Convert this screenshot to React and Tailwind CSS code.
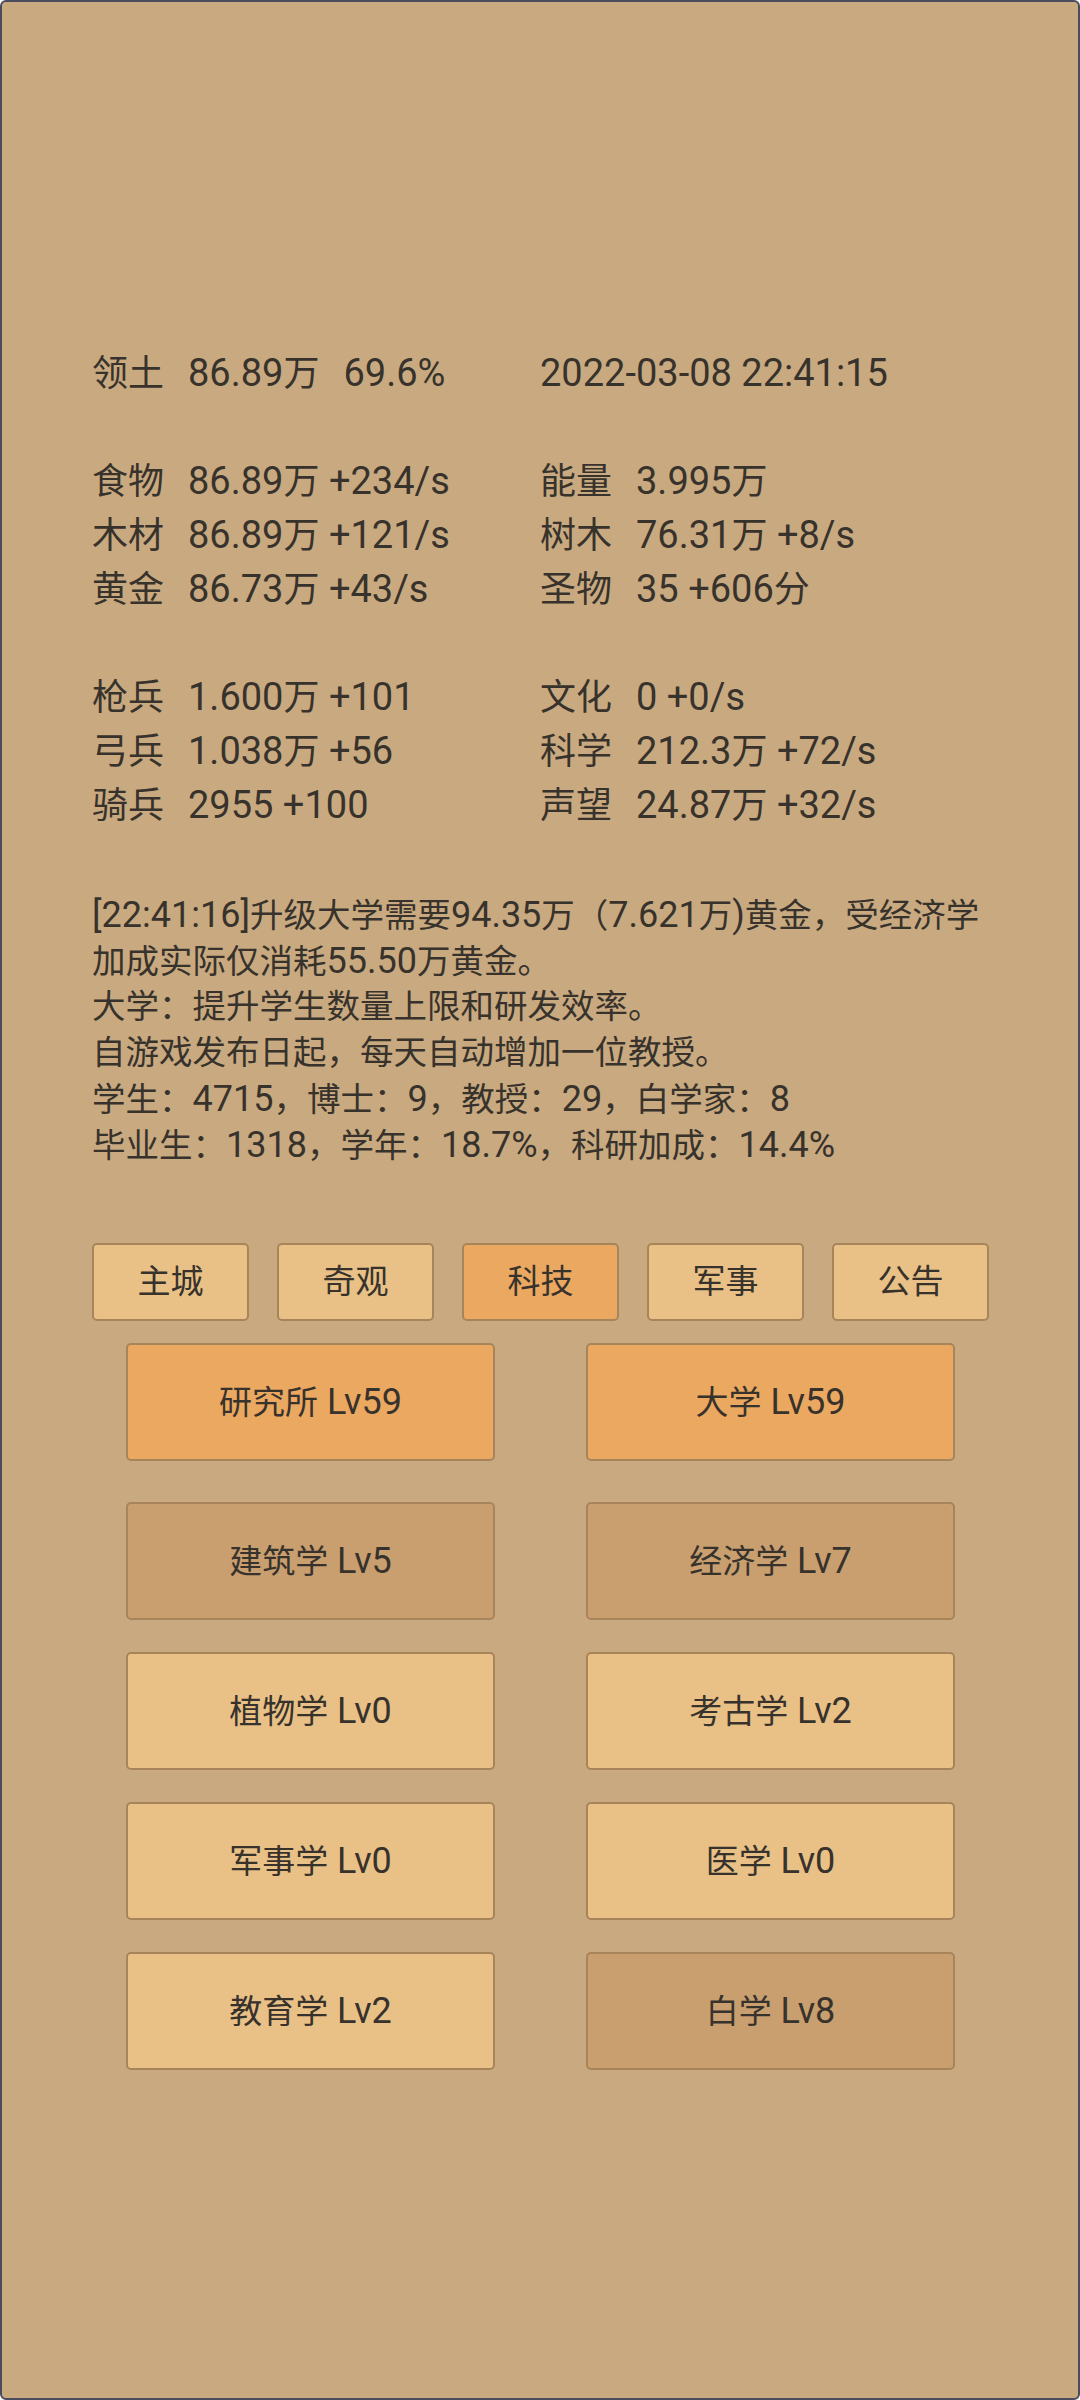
import React from "react";

const font = "font-['Roboto','Noto_Sans_CJK_SC',sans-serif]";

const CJK = /[\u3000-\u303f\u3400-\u9fff\uff00-\uffef]/;

// Wrap non-CJK runs in a span so Latin glyphs can be sized like the reference
function T({ s, latin }) {
  const parts = s.split(/([\u3000-\u303f\u3400-\u9fff\uff00-\uffef]+|  )/);
  return (
    <>
      {parts.map((p, i) => {
        if (p === "") return null;
        if (p === "  ") return <span key={i} className="inline-block w-[24px]" />;
        if (CJK.test(p)) return <span key={i}>{p}</span>;
        return (
          <span key={i} className={latin}>
            {p}
          </span>
        );
      })}
    </>
  );
}

const statLatin = "text-[38px]";
const logLatin = "text-[36px]";
const btnLatin = "text-[36px]";

function Row({ s }) {
  return (
    <div className="whitespace-pre h-[54px]">
      <T s={s} latin={statLatin} />
    </div>
  );
}

const tabs = [
  { t: "主城", a: false },
  { t: "奇观", a: false },
  { t: "科技", a: true },
  { t: "军事", a: false },
  { t: "公告", a: false },
];

const techs = [
  { t: "研究所 Lv59", c: "bg-[#eba860]", first: true },
  { t: "大学 Lv59", c: "bg-[#eba860]", first: true },
  { t: "建筑学 Lv5", c: "bg-[#c99f6f]" },
  { t: "经济学 Lv7", c: "bg-[#c99f6f]" },
  { t: "植物学 Lv0", c: "bg-[#e9c187]" },
  { t: "考古学 Lv2", c: "bg-[#e9c187]" },
  { t: "军事学 Lv0", c: "bg-[#e9c187]" },
  { t: "医学 Lv0", c: "bg-[#e9c187]" },
  { t: "教育学 Lv2", c: "bg-[#e9c187]" },
  { t: "白学 Lv8", c: "bg-[#c99f6f]" },
];

const log = [
  "[22:41:16]升级大学需要94.35万（7.621万)黄金，受经济学",
  "加成实际仅消耗55.50万黄金。",
  "大学：提升学生数量上限和研发效率。",
  "自游戏发布日起，每天自动增加一位教授。",
  "学生：4715，博士：9，教授：29，白学家：8",
  "毕业生：1318，学年：18.7%，科研加成：14.4%",
];

export default function App() {
  return (
    <div
      className={`${font} w-[1080px] h-[2400px] box-border bg-[#c9aa80] border-2 border-[#4a4c5e] rounded-[6px] text-[#38322c] pt-[344px] px-[90px]`}
    >
      <div className="grid grid-cols-[448px_1fr] text-[36px] leading-[54px]">
        <div>
          <Row s="领土  86.89万  69.6%" />
          <div className="h-[54px]" />
          <Row s="食物  86.89万 +234/s" />
          <Row s="木材  86.89万 +121/s" />
          <Row s="黄金  86.73万 +43/s" />
          <div className="h-[54px]" />
          <Row s="枪兵  1.600万 +101" />
          <Row s="弓兵  1.038万 +56" />
          <Row s="骑兵  2955 +100" />
        </div>
        <div>
          <Row s="2022-03-08 22:41:15" />
          <div className="h-[54px]" />
          <Row s="能量  3.995万" />
          <Row s="树木  76.31万 +8/s" />
          <Row s="圣物  35 +606分" />
          <div className="h-[54px]" />
          <Row s="文化  0 +0/s" />
          <Row s="科学  212.3万 +72/s" />
          <Row s="声望  24.87万 +32/s" />
        </div>
      </div>

      <div className="mt-[60px] text-[33.5px] leading-[46px] whitespace-nowrap">
        {log.map((l) => (
          <div key={l} className="h-[46px]">
            <T s={l} latin={logLatin} />
          </div>
        ))}
      </div>

      <div className="mt-[75px] w-[897px] flex justify-between">
        {tabs.map((x) => (
          <div
            key={x.t}
            className={`w-[157px] h-[78px] box-border border-2 border-[#a8845a] rounded-[5px] flex items-center justify-center text-[33px] ${
              x.a ? "bg-[#eba860]" : "bg-[#e9c187]"
            }`}
          >
            {x.t}
          </div>
        ))}
      </div>

      <div className="mt-[22px] ml-[34px] grid grid-cols-[369px_369px] gap-x-[91px] gap-y-[32px]">
        {techs.map((x) => (
          <div
            key={x.t}
            className={`h-[118px] box-border border-2 border-[#a8845a] rounded-[5px] flex items-center justify-center text-[33px] whitespace-pre ${x.c} ${
              x.first ? "mb-[9px]" : ""
            }`}
          >
            <span>
              <T s={x.t} latin={btnLatin} />
            </span>
          </div>
        ))}
      </div>
    </div>
  );
}
